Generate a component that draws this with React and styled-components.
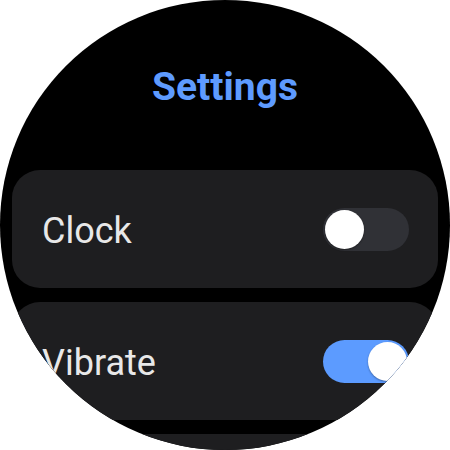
import React, { useState } from "react"
import styled, { createGlobalStyle } from "styled-components"

const GlobalStyle = createGlobalStyle`
  html, body {
    margin: 0;
    padding: 0;
    background: #ffffff;
  }
  body {
    font-family: Roboto, "Noto Sans", sans-serif;
  }
`

const Screen = styled.div`
  width: 450px;
  height: 450px;
  border-radius: 50%;
  overflow: hidden;
  background: #000000;
  display: flex;
  flex-direction: column;
  padding: 68px 12px 0;
  box-sizing: border-box;
`

const Title = styled.h1`
  margin: 0 0 63px;
  font-size: 39px;
  line-height: 39px;
  font-weight: 700;
  color: #5e9bff;
  text-align: center;
`

const List = styled.div`
  display: flex;
  flex-direction: column;
  gap: 14px;
`

const Card = styled.div`
  flex: none;
  height: 118px;
  border-radius: 28px;
  background: #1e1e20;
  display: flex;
  align-items: center;
  justify-content: space-between;
  padding: 0 29px 0 30px;
  box-sizing: border-box;
`

const Label = styled.span`
  font-size: 36px;
  line-height: 36px;
  padding-top: 4px;
  color: #e8e8e8;
`

const Track = styled.button`
  position: relative;
  width: 86px;
  height: 43px;
  border: none;
  padding: 0;
  border-radius: 22px;
  background: ${(p) => (p.$on ? "#5c9bff" : "#303136")};
  cursor: pointer;
`

const Knob = styled.span`
  position: absolute;
  top: 2px;
  left: ${(p) => (p.$on ? "45px" : "2px")};
  width: 39px;
  height: 39px;
  border-radius: 50%;
  background: #ffffff;
  box-shadow: 0 1px 2px rgba(0, 0, 0, 0.35);
`

function Toggle({ on, onClick }) {
  return (
    <Track $on={on} onClick={onClick}>
      <Knob $on={on} />
    </Track>
  )
}

const items = [
  { label: "Clock", on: false },
  { label: "Vibrate", on: true },
]

export default function App() {
  const [state, setState] = useState(items)

  const flip = (i) =>
    setState((s) => s.map((it, j) => (j === i ? { ...it, on: !it.on } : it)))

  return (
    <>
      <GlobalStyle />
      <Screen>
        <Title>Settings</Title>
        <List>
          {state.map((it, i) => (
            <Card key={it.label}>
              <Label>{it.label}</Label>
              <Toggle on={it.on} onClick={() => flip(i)} />
            </Card>
          ))}
          {/* next row, scrolled below the bezel */}
          <Card />
        </List>
      </Screen>
    </>
  )
}
